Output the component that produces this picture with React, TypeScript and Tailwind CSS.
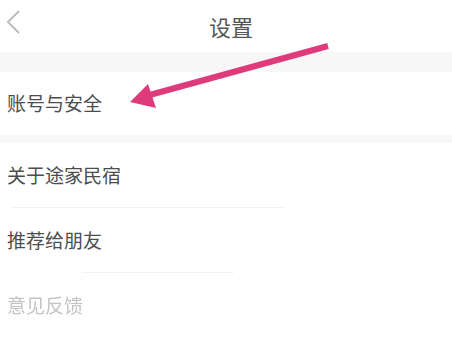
const font = { fontFamily: '"Noto Sans CJK SC", sans-serif' }

export default function App() {
  return (
    <div className="relative h-[357px] w-[452px] overflow-hidden bg-white" style={font}>
      <div className="flex h-[52px] items-center justify-center relative">
        <svg className="absolute left-[4px] top-[9px]" width="18" height="26" viewBox="0 0 18 26">
          <path d="M15 2 L4 13 L15 24" fill="none" stroke="#bdbdbd" strokeWidth="2" />
        </svg>
        <span className="pl-[10px] text-[22px] text-[#555]">设置</span>
      </div>
      <div className="h-[20px] bg-[#f7f7f8]" />
      <div className="flex h-[63px] items-center pl-[7px] text-[19px] text-[#4d4d4d]">账号与安全</div>
      <div className="h-[8px] bg-[#f8f8f9]" />
      <div className="flex h-[64px] items-center pl-[7px] text-[19px] text-[#4d4d4d]">关于途家民宿</div>
      <div className="ml-[12px] w-[272px] border-t border-[#f2f2f2]" />
      <div className="flex h-[64px] items-center pl-[7px] text-[19px] text-[#4d4d4d]">推荐给朋友</div>
      <div className="ml-[82px] w-[152px] border-t border-[#f2f2f2]" />
      <div className="flex h-[64px] items-center pl-[7px] text-[19px] text-[#c4c4c4] blur-[0.6px]">意见反馈</div>
      <svg className="absolute left-0 top-0" width="452" height="357" viewBox="0 0 452 357">
        <line x1="328" y1="46" x2="146" y2="96" stroke="#df3b7c" strokeWidth="6" />
        <polygon points="130,102 148,84 156,108" fill="#df3b7c" />
      </svg>
    </div>
  )
}
